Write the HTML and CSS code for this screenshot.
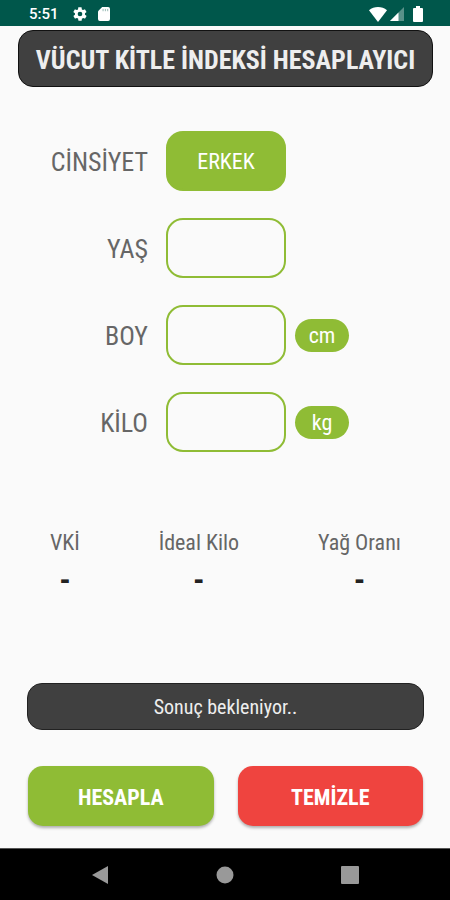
FILE: index.html
```html
<!DOCTYPE html>
<html lang="tr">
<head>
<meta charset="utf-8">
<meta name="viewport" content="width=device-width, initial-scale=1">
<title>Vücut Kitle İndeksi</title>
<link rel="stylesheet" href="styles.css">
</head>
<body>
<header class="status">
  <div class="status-group">
    <span class="clock">5:51</span>
    <svg class="icon-gear" width="16" height="16" viewBox="0 0 24 24" fill="currentColor" aria-hidden="true"><path d="M19.4 13c0-.3.1-.6.1-1s0-.7-.1-1l2.100-1.600c.2-.2.2-.4.1-.6l-2-3.500c-.1-.2-.4-.3-.6-.2l-2.500 1c-.5-.4-1.100-.7-1.700-1l-.4-2.600c0-.3-.2-.5-.5-.5h-4c-.3 0-.5.2-.5.400l-.4 2.700c-.6.200-1.200.600-1.700 1l-2.500-1c-.2-.1-.5 0-.6.200l-2 3.500c-.1.200-.1.500.1.600L4.500 11c0 .300-.1.600-.1 1s0 .700.1 1l-2.100 1.600c-.2.200-.2.400-.1.600l2 3.500c.1.200.4.300.6.200l2.500-1c.5.400 1.100.700 1.700 1l.4 2.600c0 .300.200.500.500.500h4c.3 0 .5-.2.500-.4l.4-2.700c.6-.2 1.200-.6 1.700-1l2.500 1c.200.100.500 0 .6-.2l2-3.500c.1-.2.100-.5-.1-.6L19.400 13zM12 15.500a3.500 3.500 0 1 1 0-7 3.500 3.500 0 0 1 0 7z"/></svg>
    <svg width="12" height="14" viewBox="0 0 13 15" aria-hidden="true"><path fill="currentColor" d="M4.500 0H11a2 2 0 0 1 2 2v11a2 2 0 0 1-2 2H2a2 2 0 0 1-2-2V4.500z"/><path stroke="#8fb5af" d="M5.500 2v2.500M8 2v2.500M10.500 2v2.500"/></svg>
  </div>
  <div class="status-group status-right">
    <svg width="18" height="15" viewBox="0 0 18 15" fill="currentColor" aria-hidden="true"><path d="M0 3.200C5-1 13-1 18 3.200L9 15z"/></svg>
    <svg width="14" height="14" viewBox="0 0 14 14" fill="currentColor" aria-hidden="true"><path d="M0 14 14 0v14z" opacity=".35"/><path d="M0 14 8.500 5.500V14z"/></svg>
    <svg class="icon-battery" width="10" height="16" viewBox="0 0 10 16" fill="currentColor" aria-hidden="true"><path d="M3 0h4v2h2a1 1 0 0 1 1 1v12a1 1 0 0 1-1 1H1a1 1 0 0 1-1-1V3a1 1 0 0 1 1-1h2z"/></svg>
  </div>
</header>
<main>
  <h1>VÜCUT KİTLE İNDEKSİ HESAPLAYICI</h1>
  <form>
    <div class="fields">
      <label for="gender">CİNSİYET</label>
      <button class="gender" id="gender" type="button">ERKEK</button>
      <span></span>
      <label for="age">YAŞ</label>
      <input id="age" type="text" inputmode="numeric">
      <span></span>
      <label for="height">BOY</label>
      <input id="height" type="text" inputmode="numeric">
      <span class="unit">cm</span>
      <label for="weight">KİLO</label>
      <input id="weight" type="text" inputmode="numeric">
      <span class="unit">kg</span>
    </div>
    <dl class="results">
      <div><dt>VKİ</dt><dd>-</dd></div>
      <div><dt>İdeal Kilo</dt><dd>-</dd></div>
      <div><dt>Yağ Oranı</dt><dd>-</dd></div>
    </dl>
    <output class="message">Sonuç bekleniyor..</output>
    <div class="actions">
      <button class="calculate" type="button">HESAPLA</button>
      <button class="clear" type="reset">TEMİZLE</button>
    </div>
  </form>
</main>
<nav>
  <button type="button" aria-label="Geri"><svg width="16" height="18" viewBox="0 0 16 18" aria-hidden="true"><path d="M16 0v18L0 9z"/></svg></button>
  <button type="button" aria-label="Ana ekran"><svg width="18" height="18" viewBox="0 0 18 18" aria-hidden="true"><circle cx="9" cy="9" r="8.500"/></svg></button>
  <button type="button" aria-label="Son uygulamalar"><svg width="18" height="18" viewBox="0 0 18 18" aria-hidden="true"><rect width="18" height="18" rx="1"/></svg></button>
</nav>
</body>
</html>
```

FILE: styles.css
```css
* {
  box-sizing: border-box;
}

body {
  margin: 0;
  min-height: 100vh;
  display: flex;
  flex-direction: column;
  background: #fafafa;
  color: #666;
  font-family: "Roboto Condensed", "Liberation Sans Narrow", Roboto, sans-serif;
}

button,
input {
  font: inherit;
}

.status {
  display: flex;
  justify-content: space-between;
  height: 26px;
  padding: 2px 27px 0 29px;
  background: #00574b;
  color: #fff;
}

.status-group {
  display: flex;
  align-items: center;
  gap: 10px;
}

.status-right {
  gap: 3px;
}

.icon-gear {
  margin-left: 3px;
}

.icon-battery {
  margin-left: 6px;
}

.clock {
  font: 500 15px/24px Roboto, sans-serif;
}

main {
  flex: 1;
  padding: 4px 17px 22px 18px;
}

h1 {
  margin: 0;
  padding-top: 3px;
  border: 1px solid #111;
  border-radius: 15px;
  background: #404040;
  color: #eee;
  font-size: 26px;
  font-weight: 700;
  line-height: 52px;
  text-align: center;
  white-space: nowrap;
}

form {
  padding: 44px 9px 0;
}

.fields {
  display: grid;
  grid-template-columns: 130px 120px 54px;
  align-items: center;
  gap: 27px 9px;
}

.fields label {
  padding: 2px 9px 0 0;
  font-size: 26px;
  line-height: 58px;
  text-align: right;
}

.fields input,
.gender {
  width: 120px;
  height: 60px;
  padding: 0 12px;
  border: 2px solid #8fbc35;
  border-radius: 17px;
  background: transparent;
  font-size: 22px;
  text-align: center;
}

.fields .gender {
  background: #8fbc35;
  color: #fff;
}

.unit {
  border-radius: 17px;
  background: #8fbc35;
  color: #fff;
  font-size: 22px;
  line-height: 33px;
  text-align: center;
}

.results {
  display: flex;
  justify-content: space-between;
  margin: 76px 0 0;
  padding: 0 23px;
  font-size: 22px;
  line-height: 30px;
  text-align: center;
}

.results dd {
  margin: 7px 0 0;
  color: #222;
  font-size: 32px;
  font-weight: 700;
}

.message {
  display: block;
  margin-top: 88px;
  padding-top: 2px;
  border: 1px solid #222;
  border-radius: 15px;
  background: #404040;
  color: #eee;
  font-size: 20px;
  line-height: 43px;
  text-align: center;
}

.actions {
  display: flex;
  gap: 24px;
  margin-top: 36px;
  padding: 0 1px;
}

.actions button {
  flex: 1;
  height: 60px;
  padding: 2px 0 0;
  border: 0;
  border-radius: 15px;
  color: #fff;
  font-size: 22px;
  font-weight: 700;
  box-shadow: 0 2px 3px rgb(0 0 0 / 30%);
}

.actions .calculate {
  background: #8fbc35;
}

.actions .clear {
  background: #ef443f;
}

nav {
  display: flex;
  justify-content: center;
  gap: 77px;
  height: 52px;
  border-top: 1px solid #555;
  background: #000;
}

nav button {
  display: flex;
  align-items: center;
  justify-content: center;
  width: 48px;
  padding: 0;
  border: 0;
  background: transparent;
  fill: #999;
}
```
